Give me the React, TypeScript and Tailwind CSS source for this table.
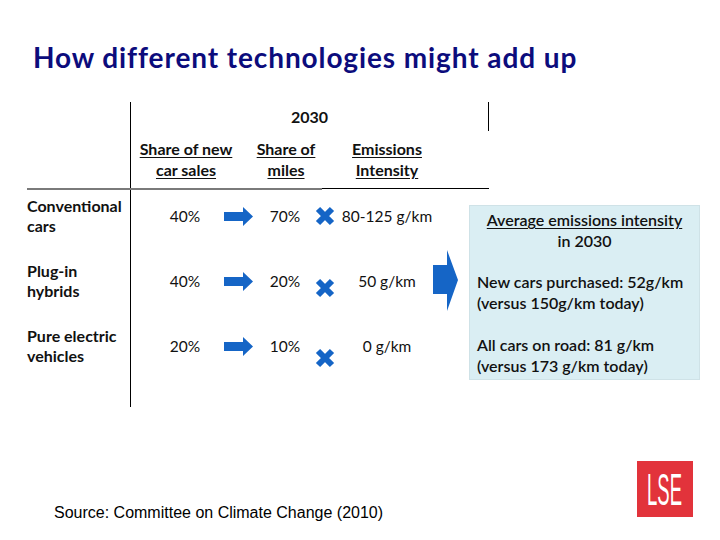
const BLUE = '#1565c6';

function SmallArrow() {
  return (
    <svg width="29" height="19" viewBox="0 0 29 19" className="block">
      <polygon points="0,5 19,5 19,0 29,9.5 19,19 19,14 0,14" fill={BLUE} />
    </svg>
  );
}

function Cross() {
  return (
    <svg width="20" height="20" viewBox="0 0 20 20" className="block">
      <path d="M3 3 L17 17 M17 3 L3 17" stroke={BLUE} strokeWidth="6" />
    </svg>
  );
}

function BigArrow() {
  return (
    <svg width="25" height="61" viewBox="0 0 25 61" className="block">
      <polygon points="0,15 14,15 14,0 25,30 14,61 14,44 0,44" fill={BLUE} />
    </svg>
  );
}

function LseLogo() {
  return (
    <div className="w-[56px] h-[56px] bg-[#e2333b] shrink-0">
      <svg width="56" height="56" viewBox="0 0 56 56" className="block">
        <text
          x="24"
          y="44"
          transform="scale(0.42,1)"
          fill="#ffffff"
          fontSize="44"
          fontFamily="'Liberation Sans', Arial, sans-serif"
        >
          LSE
        </text>
      </svg>
    </div>
  );
}

const ROWS = [
  { label: ['Conventional', 'cars'], sales: '40%', miles: '70%', intensity: '80-125 g/km', crossShift: '' },
  { label: ['Plug-in', 'hybrids'], sales: '40%', miles: '20%', intensity: '50 g/km', crossShift: 'mt-[14px]' },
  { label: ['Pure electric', 'vehicles'], sales: '20%', miles: '10%', intensity: '0 g/km', crossShift: 'mt-[24px]' },
];

export default function App() {
  return (
    <div className="w-[720px] h-[540px] bg-white flex flex-col font-['Lato',sans-serif] text-[#111]">
      <h1 className="mt-[41px] ml-[33px] h-[32px] leading-[32px] text-[28px] tracking-[0.9px] font-bold text-[#0c0c7c] whitespace-nowrap">
        How different technologies might add up
      </h1>

      {/* header of the table */}
      <div className="mt-[29px] ml-[27px] w-[462px] flex flex-col">
        <div className="flex h-[86px]">
          <div className="w-[104px] shrink-0 border-r border-black" />
          <div className="w-[358px] flex flex-col">
            <div className="h-[29px] border-r border-black flex items-center justify-center text-[16px] font-bold">
              2030
            </div>
            <div className="flex mt-[7px] text-[16px] font-bold leading-[21px] underline underline-offset-2 text-center whitespace-nowrap">
              <div className="w-[110px]">Share of new<br />car sales</div>
              <div className="w-[90px]">Share of<br />miles</div>
              <div className="w-[112px]">Emissions<br />Intensity</div>
            </div>
          </div>
        </div>
        <div className="flex">
          <div className="w-[295px] h-[2px] bg-[#7a7a7a]" />
          <div className="w-[167px] h-[1px] bg-black" />
        </div>
      </div>

      {/* body */}
      <div className="ml-[27px] flex">
        <div className="w-[406px] shrink-0 flex">
          <div className="w-[104px] shrink-0 h-[217px] border-r border-black flex flex-col pt-[6px] text-[16px] font-bold leading-[20px] whitespace-nowrap">
            {ROWS.map((r) => (
              <div key={r.label[0]} className="h-[65px]">
                {r.label[0]}
                <br />
                {r.label[1]}
              </div>
            ))}
          </div>
          <div className="shrink-0 flex flex-col pt-[6px] text-[15.5px] leading-[20px]">
            {ROWS.map((r) => (
              <div key={r.label[0]} className="h-[65px]">
                <div className="h-[40px] pl-[18px] flex items-center">
                  <div className="w-[72px] shrink-0 text-center">{r.sales}</div>
                  <div className="w-[34px] shrink-0 flex justify-center">
                    <SmallArrow />
                  </div>
                  <div className="w-[60px] shrink-0 text-center">{r.miles}</div>
                  <div className={`w-[20px] shrink-0 flex justify-center ${r.crossShift}`}>
                    <Cross />
                  </div>
                  <div className="w-[104px] shrink-0 text-center whitespace-nowrap">{r.intensity}</div>
                </div>
              </div>
            ))}
          </div>
        </div>
        <div className="mt-[60px] shrink-0">
          <BigArrow />
        </div>
        <div className="ml-[11px] mt-[15px] w-[231px] shrink-0 h-[175px] bg-[#daeef3] border border-[#cfe2e7] pt-[4px] px-[7px] text-[16px] font-semibold leading-[20.8px] whitespace-nowrap">
          <p className="text-center underline underline-offset-2">Average emissions intensity</p>
          <p className="text-center">in 2030</p>
          <p className="mt-[20.8px]">New cars purchased: 52g/km</p>
          <p>(versus 150g/km today)</p>
          <p className="mt-[20.8px]">All cars on road: 81 g/km</p>
          <p>(versus 173 g/km today)</p>
        </div>
      </div>

      {/* footer */}
      <div className="mt-[54px] flex justify-between items-start pl-[54px] pr-[27px]">
        <p className="mt-[43px] text-[16px] leading-[18px] font-['Liberation_Sans',Arial,sans-serif] text-black">
          Source: Committee on Climate Change (2010)
        </p>
        <LseLogo />
      </div>
    </div>
  );
}
